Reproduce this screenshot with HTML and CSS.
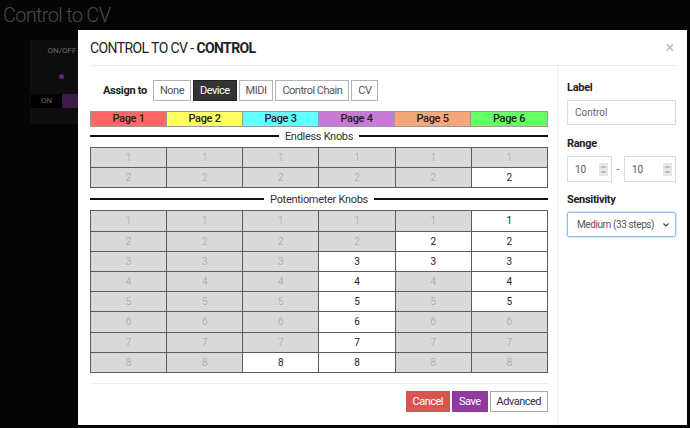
FILE: index.html
```html
<!DOCTYPE html>
<html lang="en">
<head>
<meta charset="utf-8">
<title>Control to CV</title>
<link rel="stylesheet" href="styles.css">
</head>
<body>
  <div class="app">
    <h1 class="app-title">Control to CV</h1>
    <div class="plugin">
      <div class="ctrl">
        <div class="ctrl-label">ON/OFF</div>
        <div class="ctrl-led"></div>
        <div class="ctrl-switch"><span class="sw-on">ON</span><span class="sw-off"></span></div>
      </div>
    </div>
  </div>

  <div class="modal">
    <div class="modal-header">
      <h2 class="modal-title">CONTROL TO CV - <b>CONTROL</b></h2>
      <span class="close">&times;</span>
    </div>
    <div class="modal-body">
      <div class="main">
        <div class="assign">
          <span class="assign-label">Assign to</span>
          <button class="btn">None</button>
          <button class="btn active">Device</button>
          <button class="btn">MIDI</button>
          <button class="btn">Control Chain</button>
          <button class="btn">CV</button>
        </div>

        <div class="pages">
          <div class="page p1">Page 1</div>
          <div class="page p2">Page 2</div>
          <div class="page p3">Page 3</div>
          <div class="page p4">Page 4</div>
          <div class="page p5">Page 5</div>
          <div class="page p6">Page 6</div>
        </div>

        <div class="divider"><span>Endless Knobs</span></div>
        <table class="grid">
          <tr><td class="off">1</td><td class="off">1</td><td class="off">1</td><td class="off">1</td><td class="off">1</td><td class="off">1</td></tr>
          <tr><td class="off">2</td><td class="off">2</td><td class="off">2</td><td class="off">2</td><td class="off">2</td><td class="on">2</td></tr>
        </table>

        <div class="divider"><span>Potentiometer Knobs</span></div>
        <table class="grid">
          <tr><td class="off">1</td><td class="off">1</td><td class="off">1</td><td class="off">1</td><td class="off">1</td><td class="on">1</td></tr>
          <tr><td class="off">2</td><td class="off">2</td><td class="off">2</td><td class="off">2</td><td class="on">2</td><td class="on">2</td></tr>
          <tr><td class="off">3</td><td class="off">3</td><td class="off">3</td><td class="on">3</td><td class="on">3</td><td class="on">3</td></tr>
          <tr><td class="off">4</td><td class="off">4</td><td class="off">4</td><td class="on">4</td><td class="off">4</td><td class="on">4</td></tr>
          <tr><td class="off">5</td><td class="off">5</td><td class="off">5</td><td class="on">5</td><td class="off">5</td><td class="on">5</td></tr>
          <tr><td class="off">6</td><td class="off">6</td><td class="off">6</td><td class="on">6</td><td class="off">6</td><td class="off">6</td></tr>
          <tr><td class="off">7</td><td class="off">7</td><td class="off">7</td><td class="on">7</td><td class="off">7</td><td class="off">7</td></tr>
          <tr><td class="off">8</td><td class="off">8</td><td class="on">8</td><td class="on">8</td><td class="off">8</td><td class="off">8</td></tr>
        </table>

        <div class="footer">
          <button class="btn btn-cancel">Cancel</button>
          <button class="btn btn-save">Save</button>
          <button class="btn btn-adv">Advanced</button>
        </div>
      </div>

      <aside class="side">
        <div class="field-label">Label</div>
        <div class="input">Control</div>

        <div class="field-label gap">Range</div>
        <div class="range">
          <div class="number n1"><span>10</span><span class="spin"><svg width="9" height="13" viewBox="0 0 9 13"><path d="M2.5 5 L4.5 3 L6.5 5 M2.5 8 L4.5 10 L6.5 8" fill="none" stroke="#777" stroke-width="0.9"/></svg></span></div>
          <span class="dash">-</span>
          <div class="number n2"><span>10</span><span class="spin"><svg width="9" height="13" viewBox="0 0 9 13"><path d="M2.5 5 L4.5 3 L6.5 5 M2.5 8 L4.5 10 L6.5 8" fill="none" stroke="#777" stroke-width="0.9"/></svg></span></div>
        </div>

        <div class="field-label gap2">Sensitivity</div>
        <div class="select"><span>Medium (33 steps)</span><svg width="8" height="6" viewBox="0 0 8 6"><path d="M1.5 1.5 L4 4 L6.5 1.5" fill="none" stroke="#444" stroke-width="1.1"/></svg></div>
      </aside>
    </div>
  </div>
</body>
</html>
```
FILE: styles.css
```css
* { box-sizing: border-box; }

html, body {
  margin: 0;
  padding: 0;
}

body {
  width: 690px;
  height: 428px;
  overflow: hidden;
  position: relative;
  background: #050505;
  font-family: Roboto, "Liberation Sans", sans-serif;
}

/* dimmed page behind the dialog */
.app-title {
  margin: 0;
  padding: 3px 0 0 3px;
  font-size: 20px;
  font-weight: 300;
  line-height: 24px;
  letter-spacing: -0.7px;
  color: #4a4a4a;
}

.plugin {
  margin: 13px 0 0 30px;
  width: 200px;
  height: 84px;
  background: #0e0e0e;
  padding-top: 6px;
}

.ctrl {
  width: 62px;
  display: flex;
  flex-direction: column;
  align-items: center;
}

.ctrl-label {
  font-size: 8px;
  line-height: 10px;
  color: #6c6c6c;
  margin-left: 2px;
}

.ctrl-led {
  margin-top: 18px;
  width: 5px;
  height: 5px;
  border-radius: 50%;
  background: #5a2a70;
}

.ctrl-switch {
  margin-top: 15px;
  margin-left: 1px;
  align-self: flex-start;
  display: flex;
  height: 14px;
}

.sw-on {
  width: 31px;
  background: #000;
  color: #6a6a6a;
  font-size: 8px;
  line-height: 14px;
  text-align: center;
}

.sw-off {
  width: 16px;
  background: #3a1c47;
}

/* dialog */
.modal {
  position: absolute;
  left: 78px;
  top: 30px;
  width: 609px;
  height: 395px;
  background: #fff;
  display: flex;
  flex-direction: column;
}

.modal-header {
  margin: 0 11px 0 12px;
  height: 36px;
  border-bottom: 1px solid #ececec;
  display: flex;
  align-items: center;
  justify-content: space-between;
}

.modal-title {
  margin: 0;
  font-size: 14px;
  font-weight: 400;
  letter-spacing: -0.6px;
  color: #222;
}

.modal-title b {
  font-weight: 700;
}

.close {
  font-size: 16px;
  color: #bbb;
  margin-right: 2px;
}

.modal-body {
  flex: 1;
  display: flex;
}

.main {
  width: 458px;
  margin-left: 12px;
  padding-top: 14px;
  display: flex;
  flex-direction: column;
}

.btn {
  font-family: inherit;
  height: 21px;
  padding: 0 6px;
  font-size: 11px;
  letter-spacing: -0.5px;
  color: #555;
  background: #fff;
  border: 1px solid #b4b4b4;
  border-radius: 0;
  margin: 0;
}

.assign {
  display: flex;
  align-items: center;
  gap: 2px;
  height: 21px;
}

.assign-label {
  width: 61px;
  padding-left: 13px;
  font-size: 11px;
  font-weight: 700;
  letter-spacing: -0.3px;
  color: #222;
}

.btn.active {
  background: #333;
  border-color: #222;
  color: #fff;
}

.pages {
  margin-top: 10px;
  height: 16px;
  display: grid;
  grid-template-columns: repeat(6, 1fr);
  border: 1px solid #9a9a9a;
}

.page {
  font-size: 11px;
  font-weight: 500;
  line-height: 14px;
  text-align: center;
  color: #222;
  letter-spacing: -0.3px;
  border-right: 1px solid #9a9a9a;
}

.page:last-child { border-right: none; }

.p1 { background: #ff6666; }
.p2 { background: #ffff66; }
.p3 { background: #66ffff; }
.p4 { background: #c77ad8; }
.p5 { background: #f5a77c; }
.p6 { background: #66ff66; }

.divider {
  margin-top: 3px;
  height: 12px;
  display: flex;
  align-items: center;
}

.divider::before,
.divider::after {
  content: "";
  flex: 1;
  height: 2px;
  background: #111;
}

.divider span {
  padding: 0 6px;
  font-size: 11px;
  letter-spacing: -0.3px;
  color: #333;
}

.grid {
  margin-top: 5px;
  width: 458px;
  border-collapse: collapse;
  table-layout: fixed;
}

.grid + .divider { margin-top: 5px; }

.grid td {
  height: 20.2px;
  padding: 0;
  border: 1px solid #5c5c5c;
  text-align: center;
  font-size: 10px;
  font-weight: 300;
}

.grid td.off {
  background: #d9d9d9;
  color: #a0a0a0;
}

.grid td.on {
  background: #fff;
  color: #222;
  font-weight: 400;
}

.footer {
  margin-top: 10px;
  border-top: 1px solid #eeeeee;
  padding-top: 7px;
  display: flex;
  justify-content: flex-end;
  gap: 2px;
}

.footer .btn {
  padding: 0 6px;
}

.btn-cancel {
  background: #d9534f;
  border-color: #d9534f;
  color: #fff;
}

.btn-save {
  background: #8e3aa0;
  border-color: #8e3aa0;
  color: #fff;
}

.btn-adv {
  color: #333;
  border-color: #aaa;
}

/* settings column */
.side {
  margin-left: 9px;
  width: 130px;
  border-left: 1px solid #efefef;
  padding: 15px 11px 0 9px;
}

.field-label {
  font-size: 11px;
  line-height: 14px;
  font-weight: 700;
  letter-spacing: -0.3px;
  color: #222;
}

.field-label.gap { margin-top: 12px; }
.field-label.gap2 { margin-top: 11px; }

.input {
  margin-top: 5px;
  height: 25px;
  border: 1px solid #dcdcdc;
  padding: 0 7px;
  font-size: 10px;
  line-height: 23px;
  color: #666;
}

.range {
  margin-top: 5px;
  display: flex;
  align-items: center;
  height: 26px;
}

.number {
  height: 26px;
  border: 1px solid #dcdcdc;
  display: flex;
  align-items: center;
  justify-content: space-between;
  padding: 0 3px 0 7px;
  font-size: 10px;
  color: #555;
}

.n1 { width: 45px; }
.n2 { width: 52px; }

.spin {
  width: 9px;
  height: 13px;
  background: #e6e6e6;
  display: flex;
}

.dash {
  width: 12px;
  text-align: center;
  font-size: 10px;
  color: #555;
}

.select {
  margin-top: 5px;
  height: 25px;
  border: 1px solid #8cc3f2;
  box-shadow: 0 0 0 1px rgba(140, 195, 242, 0.35);
  border-radius: 2px;
  display: flex;
  align-items: center;
  justify-content: space-between;
  padding: 0 5px 0 9px;
  font-size: 10px;
  letter-spacing: -0.4px;
  color: #555;
}
```
